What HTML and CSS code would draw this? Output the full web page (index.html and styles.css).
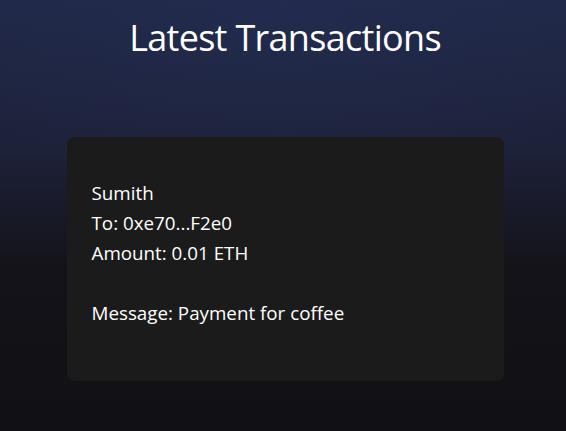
FILE: index.html
```html
<!DOCTYPE html>
<html>
<head>
<meta charset="utf-8">
<link rel="stylesheet" href="styles.css">
</head>
<body>
<main class="page">
  <h1 class="title">Latest Transactions</h1>
  <section class="card">
    <p class="line">Sumith</p>
    <p class="line">To: 0xe70...F2e0</p>
    <p class="line">Amount: 0.01 ETH</p>
    <p class="line blank"></p>
    <p class="line">Message: Payment for coffee</p>
  </section>
</main>
</body>
</html>
```
FILE: styles.css
```css
html, body {
  margin: 0;
  padding: 0;
  height: 100%;
}
body {
  background: radial-gradient(ellipse 70% 45% at 50% 0%, rgba(36,46,82,0.6), rgba(36,46,82,0) 100%),
              linear-gradient(to bottom, #202848 0%, #1d2139 35%, #131319 62%, #101015 100%);
  font-family: "Open Sans", "Noto Sans", sans-serif;
  color: #ffffff;
  overflow: hidden;
}
.page {
  display: flex;
  flex-direction: column;
  align-items: center;
  padding-top: 14px;
  padding-left: 4px;
}
.title {
  margin: 0;
  font-size: 36px;
  font-weight: 400;
  line-height: 48px;
  letter-spacing: -0.7px;
}
.card {
  margin-top: 75px;
  width: 437px;
  height: 244px;
  box-sizing: border-box;
  background: #1b1b1b;
  border-radius: 8px;
  padding: 41px 25px 0;
}
.line {
  margin: 0;
  font-size: 18.8px;
  line-height: 30px;
  height: 30px;
}
```
